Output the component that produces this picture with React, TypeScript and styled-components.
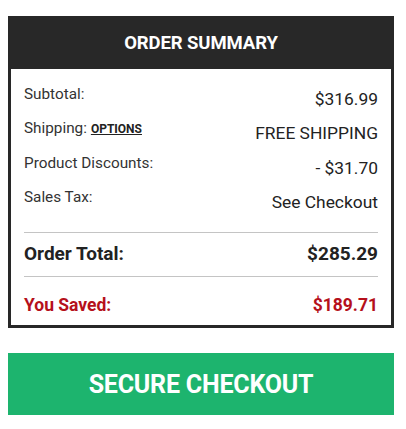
import React from "react";
import styled, { createGlobalStyle } from "styled-components";

const GlobalStyle = createGlobalStyle`
  html, body {
    margin: 0;
    padding: 0;
    background: #fff;
    font-family: Roboto, "Liberation Sans", Arial, sans-serif;
  }
`;

const Page = styled.div`
  padding: 16px 8px 0;
  width: 386px;
`;

const Card = styled.div`
  border: 3px solid #282828;
  border-top: none;
`;

const Header = styled.div`
  height: 53px;
  background: #282828;
  color: #fff;
  display: flex;
  align-items: center;
  justify-content: center;
  font-weight: 700;
  font-size: 18.5px;
  letter-spacing: -0.1px;
`;

const Body = styled.div`
  padding: 16px 13px 0;
`;

const Row = styled.div`
  display: flex;
  justify-content: space-between;
  align-items: flex-start;
  height: 34.3px;
`;

const Label = styled.div`
  font-size: 15.3px;
  line-height: 18px;
  color: #333;
`;

const Value = styled.div`
  font-size: 17.4px;
  line-height: 20px;
  color: #222;
  margin-top: 4px;
`;

const OptionsLink = styled.a`
  font-size: 12px;
  font-weight: 700;
  color: #222;
  text-decoration: underline;
  margin-left: 4px;
`;

const Divider = styled.div<{ $top: number }>`
  height: 1px;
  background: #c4c4c4;
  margin-top: ${(p) => p.$top}px;
`;

const TotalRow = styled.div<{ $red?: boolean; $pad: string; $size: number }>`
  display: flex;
  justify-content: space-between;
  align-items: baseline;
  padding: ${(p) => p.$pad};
  font-weight: 700;
  font-size: ${(p) => p.$size}px;
  line-height: 22px;
  color: ${(p) => (p.$red ? "#b5101b" : "#222")};
`;

const CheckoutButton = styled.button`
  display: flex;
  align-items: center;
  justify-content: center;
  width: 386px;
  height: 62px;
  margin-top: 25px;
  border: none;
  background: #1db46e;
  color: #fff;
  font-family: Roboto, "Liberation Sans", Arial, sans-serif;
  font-weight: 700;
  font-size: 25px;
  letter-spacing: -0.2px;
  cursor: pointer;
`;

const lines = [
  { label: "Subtotal:", value: "$316.99" },
  { label: "Shipping:", value: "FREE SHIPPING", link: "OPTIONS" },
  { label: "Product Discounts:", value: "- $31.70" },
  { label: "Sales Tax:", value: "See Checkout" },
];

export default function App() {
  return (
    <>
      <GlobalStyle />
      <Page>
        <Card>
          <Header>ORDER SUMMARY</Header>
          <Body>
            {lines.map((l) => (
              <Row key={l.label}>
                <Label>
                  {l.label}
                  {l.link && <OptionsLink href="#">{l.link}</OptionsLink>}
                </Label>
                <Value>{l.value}</Value>
              </Row>
            ))}
            <Divider $top={10} />
            <TotalRow $pad="10px 0 11px" $size={19}>
              <span>Order Total:</span>
              <span>$285.29</span>
            </TotalRow>
            <Divider $top={0} />
            <TotalRow $red $pad="17px 0 9px" $size={17.5}>
              <span>You Saved:</span>
              <span>$189.71</span>
            </TotalRow>
          </Body>
        </Card>
        <CheckoutButton>SECURE CHECKOUT</CheckoutButton>
      </Page>
    </>
  );
}
